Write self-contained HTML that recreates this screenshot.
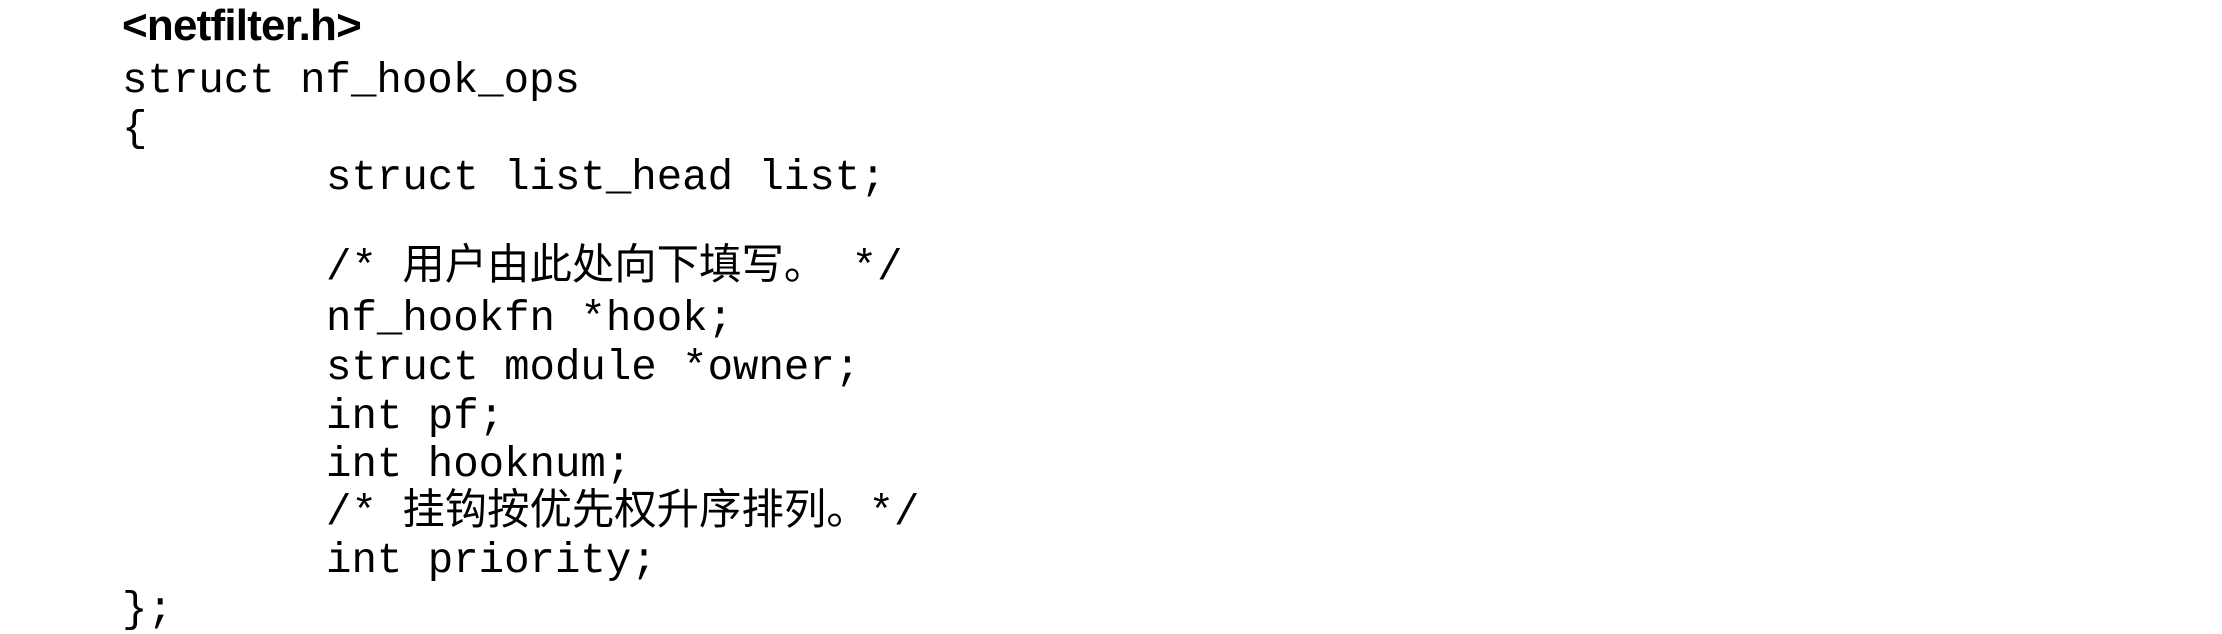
<!DOCTYPE html>
<html><head><meta charset="utf-8"><style>
body{margin:0;width:2222px;height:633px;background:#fff;position:relative;overflow:hidden}
div{position:absolute;white-space:pre;line-height:42px;color:#000}
.m{font-family:"Liberation Mono","Noto Sans CJK SC",monospace;font-size:42.4px}
.h{font-family:"Liberation Sans",sans-serif;font-weight:bold;font-size:44px;letter-spacing:-0.8px;line-height:48px}
</style></head><body>
<div class="h" style="left:122px;top:2px">&lt;netfilter.h&gt;</div>
<div class="m" style="left:122px;top:60px">struct nf_hook_ops</div>
<div class="m" style="left:122px;top:108px">{</div>
<div class="m" style="left:326px;top:157px">struct list_head list;</div>
<div class="m" style="left:326px;top:247px">/* 用户由此处向下填写。 */</div>
<div class="m" style="left:326px;top:298px">nf_hookfn *hook;</div>
<div class="m" style="left:326px;top:347px">struct module *owner;</div>
<div class="m" style="left:326px;top:396px">int pf;</div>
<div class="m" style="left:326px;top:444px">int hooknum;</div>
<div class="m" style="left:326px;top:492px">/* 挂钩按优先权升序排列。*/</div>
<div class="m" style="left:326px;top:540px">int priority;</div>
<div class="m" style="left:122px;top:589px">};</div>
</body></html>
